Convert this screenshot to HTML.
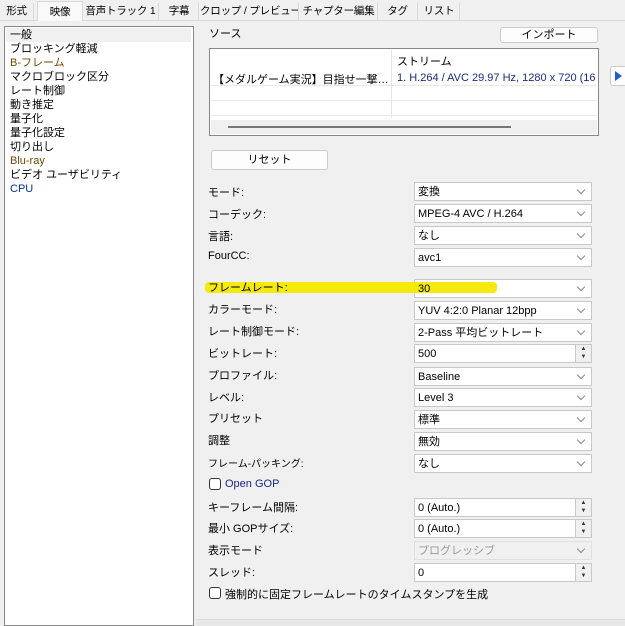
<html><head><style>
body{margin:0;width:625px;height:625px;background:#f0f0f0;font-family:"Liberation Sans","Noto Sans CJK JP",sans-serif;font-size:11px;color:#000;position:relative;overflow:hidden}
.a{position:absolute;white-space:nowrap}
.tab{position:absolute;top:3px;height:17px;line-height:17px;padding:0;text-align:center;border-right:1px solid #d9d9d9;white-space:nowrap;box-sizing:border-box;overflow:hidden;font-size:10.5px;letter-spacing:-0.2px}
.cb{position:absolute;left:414px;width:178px;height:19px;background:#fff;border:1px solid #c8c8c8;box-sizing:border-box;line-height:18px;padding-left:3px;white-space:nowrap}
.cb::after{content:"";position:absolute;right:7px;top:4px;width:5px;height:5px;border-right:1px solid #888;border-bottom:1px solid #888;transform:rotate(45deg)}
.sp{position:absolute;left:414px;width:178px;height:19px;background:#fff;border:1px solid #c8c8c8;box-sizing:border-box;line-height:18px;padding-left:3px}
.sp i{position:absolute;right:0;top:0;width:15px;height:17px;border-left:1px solid #c8c8c8;background:#f0f0f0;font-style:normal;font-size:6px;line-height:8px;text-align:center;color:#333}
.lb{position:absolute;left:208px;white-space:nowrap}
.btn{position:absolute;background:#fdfdfd;border:1px solid #ccc;border-radius:3px;text-align:center;box-sizing:border-box}
.chk{position:absolute;width:12px;height:12px;border:1px solid #333;border-radius:3px;background:#fff;box-sizing:border-box}
</style></head><body>
<div class="a" style="left:0;top:20px;width:625px;height:1px;background:#d9d9d9"></div>
<div class="tab" style="left:0;width:34px">形式</div>
<div class="tab" style="left:37px;top:1px;height:20px;line-height:20px;width:46px;background:#f9f9f9;border:1px solid #d9d9d9;border-bottom:none">映像</div>
<div class="tab" style="left:83px;width:76px">音声トラック 1</div>
<div class="tab" style="left:160px;width:39px">字幕</div>
<div class="tab" style="left:200px;width:99px">クロップ / プレビュー</div>
<div class="tab" style="left:300px;width:78px">チャプター編集</div>
<div class="tab" style="left:378px;width:40px">タグ</div>
<div class="tab" style="left:419px;width:41px">リスト</div>

<div class="a" style="left:4px;top:26px;width:190px;height:600px;background:#fff;border:1px solid #888;box-sizing:border-box"></div>
<div class="a" style="left:6px;top:28px;width:185px;height:14px;background:#f0f0f0"></div>
<div class="a" style="left:10px;top:28px;line-height:14px">一般<br>ブロッキング軽減<br><span style="color:#6b4a00">B-フレーム</span><br>マクロブロック区分<br>レート制御<br>動き推定<br>量子化<br>量子化設定<br>切り出し<br><span style="color:#6b4a00">Blu-ray</span><br>ビデオ ユーザビリティ<br><span style="color:#003399">CPU</span></div>

<div class="a" style="left:209px;top:25px">ソース</div>
<div class="btn" style="left:500px;top:27px;width:98px;height:16px;line-height:14px">インポート</div>
<div class="a" style="left:209px;top:48px;width:390px;height:88px;background:#fff;border:1px solid #888;box-sizing:border-box"></div>
<div class="a" style="left:391px;top:50px;width:1px;height:68px;background:#e5e5e5"></div>
<div class="a" style="left:397px;top:53px">ストリーム</div>
<div class="a" style="left:213px;top:71px">【メダルゲーム実況】目指せ一撃…</div>
<div class="a" style="left:397px;top:72px;color:#1a2a80">1. H.264 / AVC  29.97 Hz, 1280 x 720 (16</div>
<div class="a" style="left:211px;top:85px;width:386px;height:1px;background:#e8e8e8"></div>
<div class="a" style="left:211px;top:100px;width:386px;height:1px;background:#e8e8e8"></div>
<div class="a" style="left:211px;top:115px;width:386px;height:1px;background:#e8e8e8"></div>
<div class="a" style="left:211px;top:120px;width:386px;height:14px;background:#f0f0f0"></div>
<div class="a" style="left:228px;top:126px;width:283px;height:2px;background:#777"></div>
<div class="btn" style="left:610px;top:66px;width:20px;height:20px;"><span style="position:absolute;left:4px;top:4px;border-left:7px solid #1c5fd0;border-top:5px solid transparent;border-bottom:5px solid transparent"></span></div>
<div class="btn" style="left:211px;top:150px;width:117px;height:20px;line-height:18px">リセット</div>

<div class="lb" style="top:184px">モード:</div><div class="cb" style="top:182px">変換</div>
<div class="lb" style="top:206px">コーデック:</div><div class="cb" style="top:204px">MPEG-4 AVC / H.264</div>
<div class="lb" style="top:228px">言語:</div><div class="cb" style="top:226px">なし</div>
<div class="lb" style="top:250px">FourCC:</div><div class="cb" style="top:248px">avc1</div>
<div class="cb" style="top:279px">30</div>
<div class="a" style="left:205px;top:282px;width:292px;height:11px;background:#f4e800;border-radius:4px;opacity:0.95"></div>
<div class="lb" style="top:279px">フレームレート:</div>
<div class="a" style="left:418px;top:280px;line-height:18px">30</div>
<div class="lb" style="top:301px">カラーモード:</div><div class="cb" style="top:301px">YUV 4:2:0 Planar 12bpp</div>
<div class="lb" style="top:323px">レート制御モード:</div><div class="cb" style="top:323px">2-Pass 平均ビットレート</div>
<div class="lb" style="top:345px">ビットレート:</div><div class="sp" style="top:344px">500<i>▲<br>▼</i></div>
<div class="lb" style="top:367px">プロファイル:</div><div class="cb" style="top:367px">Baseline</div>
<div class="lb" style="top:389px">レベル:</div><div class="cb" style="top:388px">Level 3</div>
<div class="lb" style="top:410px">プリセット</div><div class="cb" style="top:410px">標準</div>
<div class="lb" style="top:432px">調整</div><div class="cb" style="top:432px">無効</div>
<div class="lb" style="top:455px;font-size:10px">フレーム-パッキング:</div><div class="cb" style="top:454px">なし</div>
<div class="chk" style="left:209px;top:478px"></div><div class="a" style="left:225px;top:478px;color:#1a2a80">Open GOP</div>
<div class="lb" style="top:499px">キーフレーム間隔:</div><div class="sp" style="top:498px">0 (Auto.)<i>▲<br>▼</i></div>
<div class="lb" style="top:520px">最小 GOPサイズ:</div><div class="sp" style="top:519px">0 (Auto.)<i>▲<br>▼</i></div>
<div class="lb" style="top:542px">表示モード</div><div class="cb" style="top:541px;background:#f0f0f0;border-color:#e0e0e0;color:#999">プログレッシブ</div>
<div class="lb" style="top:564px">スレッド:</div><div class="sp" style="top:563px">0<i>▲<br>▼</i></div>
<div class="chk" style="left:209px;top:587px"></div><div class="a" style="left:225px;top:586px">強制的に固定フレームレートのタイムスタンプを生成</div>
<div class="a" style="left:196px;top:619px;width:429px;height:6px;background:#e8e8e8;border-top:1px solid #ddd"></div>
</body></html>
